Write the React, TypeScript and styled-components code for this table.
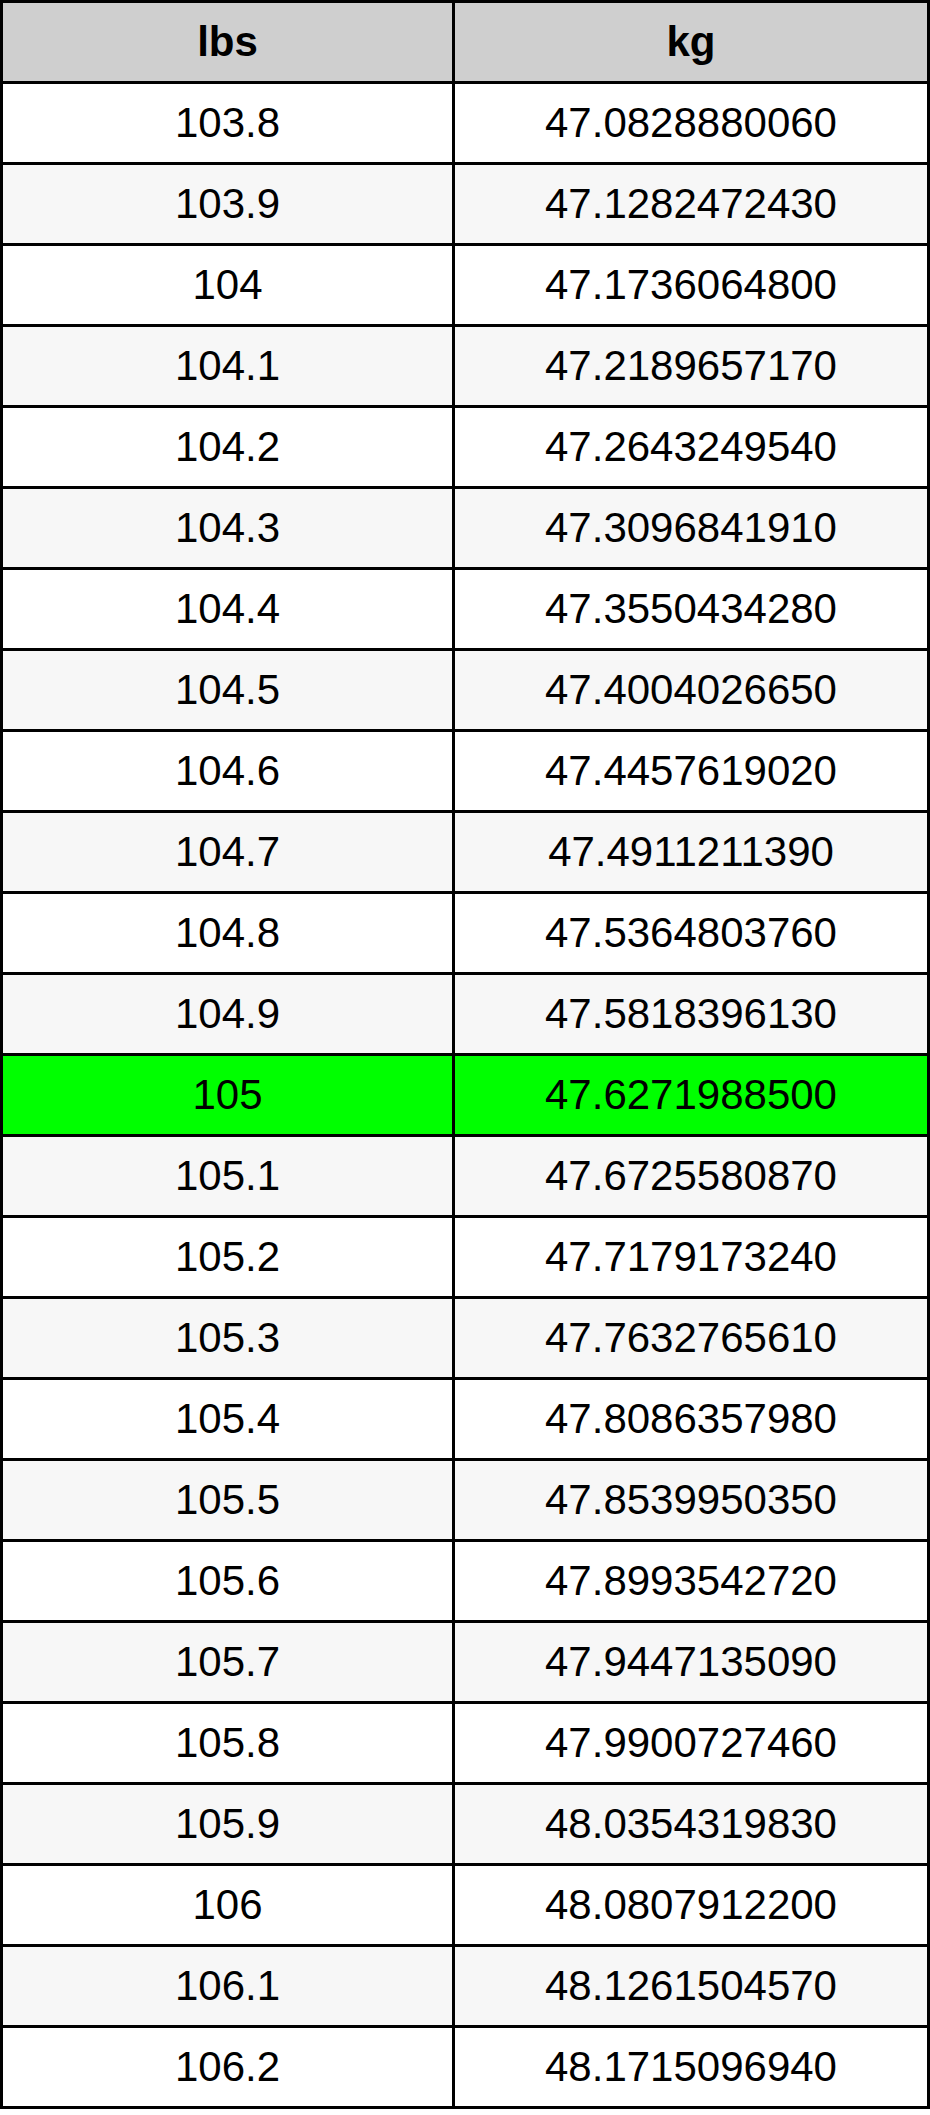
import React from "react";
import styled, { createGlobalStyle } from "styled-components";

const GlobalStyle = createGlobalStyle`
  html, body {
    margin: 0;
    padding: 0;
    background: #ffffff;
  }
  body {
    font-family: "Liberation Sans", Arial, sans-serif;
  }
`;

const Table = styled.div`
  display: grid;
  grid-template-columns: 449px 472px;
  grid-auto-rows: 78px;
  gap: 3px;
  width: 930px;
  box-sizing: border-box;
  border: 3px solid #000;
  background: #000;
  font-family: "Liberation Sans", Arial, sans-serif;
  font-size: 42px;
  color: #000;
`;

type Variant = "head" | "even" | "odd" | "hit";

const bg: Record<Variant, string> = {
  head: "#cfcfcf",
  even: "#ffffff",
  odd: "#f7f7f7",
  hit: "#00ff00",
};

const Cell = styled.div<{ $v: Variant }>`
  display: flex;
  align-items: center;
  justify-content: center;
  background: ${(p) => bg[p.$v]};
  font-weight: ${(p) => (p.$v === "head" ? 700 : 400)};
  line-height: 1;
`;

const rows: [string, string][] = [
  ["103.8", "47.0828880060"],
  ["103.9", "47.1282472430"],
  ["104", "47.1736064800"],
  ["104.1", "47.2189657170"],
  ["104.2", "47.2643249540"],
  ["104.3", "47.3096841910"],
  ["104.4", "47.3550434280"],
  ["104.5", "47.4004026650"],
  ["104.6", "47.4457619020"],
  ["104.7", "47.4911211390"],
  ["104.8", "47.5364803760"],
  ["104.9", "47.5818396130"],
  ["105", "47.6271988500"],
  ["105.1", "47.6725580870"],
  ["105.2", "47.7179173240"],
  ["105.3", "47.7632765610"],
  ["105.4", "47.8086357980"],
  ["105.5", "47.8539950350"],
  ["105.6", "47.8993542720"],
  ["105.7", "47.9447135090"],
  ["105.8", "47.9900727460"],
  ["105.9", "48.0354319830"],
  ["106", "48.0807912200"],
  ["106.1", "48.1261504570"],
  ["106.2", "48.1715096940"],
];

export default function App() {
  return (
    <>
      <GlobalStyle />
      <Table>
        <Cell $v="head">lbs</Cell>
        <Cell $v="head">kg</Cell>
        {rows.map(([lbs, kg], i) => {
          const v: Variant = lbs === "105" ? "hit" : i % 2 === 1 ? "odd" : "even";
          return (
            <React.Fragment key={lbs}>
              <Cell $v={v}>{lbs}</Cell>
              <Cell $v={v}>{kg}</Cell>
            </React.Fragment>
          );
        })}
      </Table>
    </>
  );
}
